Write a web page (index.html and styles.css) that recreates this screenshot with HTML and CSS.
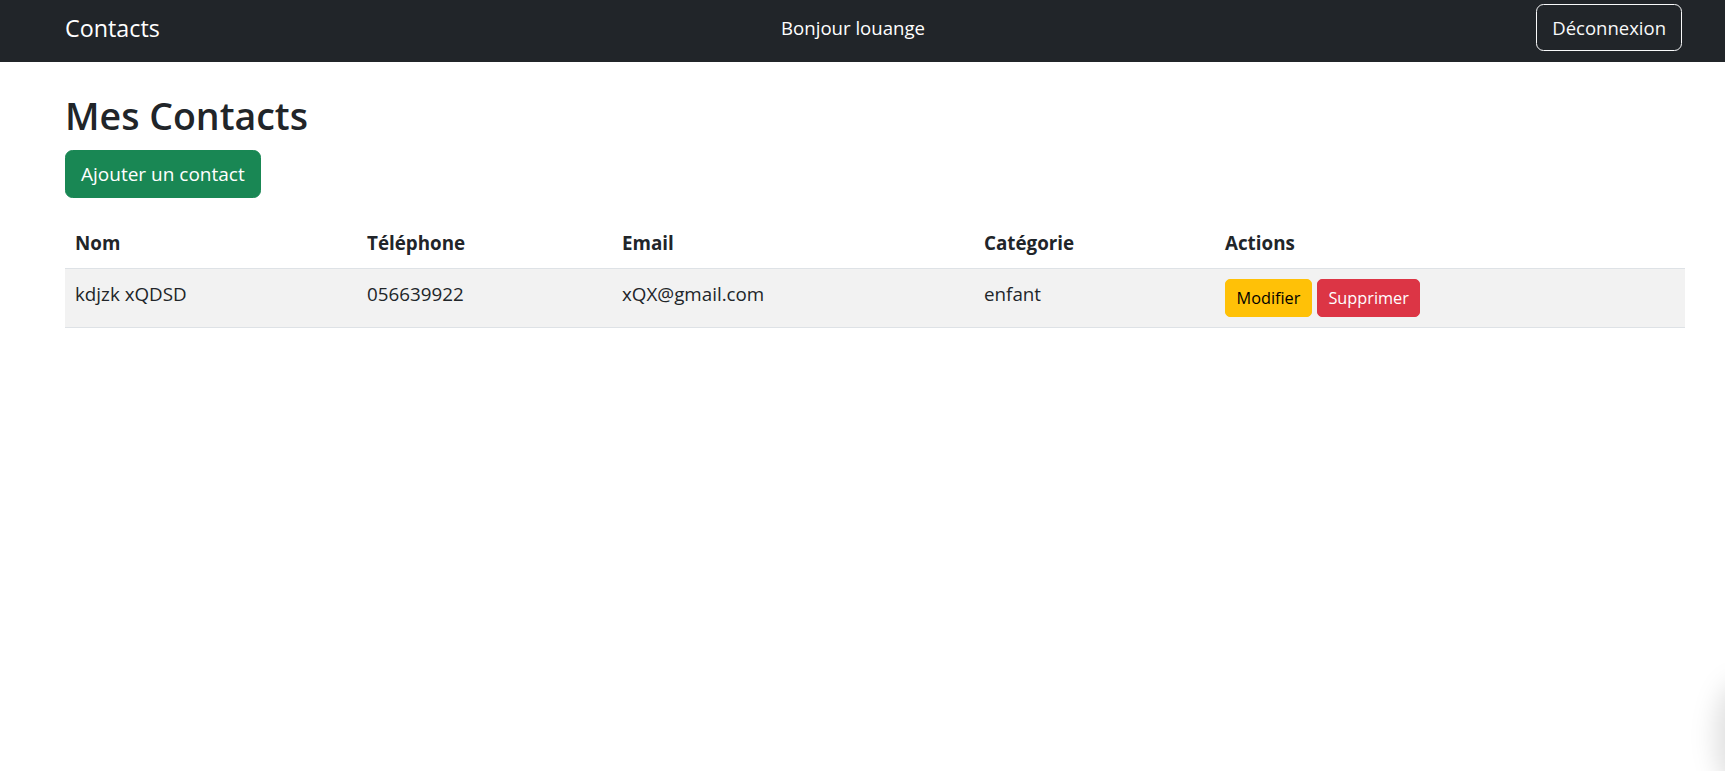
FILE: index.html
```html
<!DOCTYPE html>
<html lang="fr">
<head>
<meta charset="utf-8">
<title>Mes Contacts</title>
<link rel="stylesheet" href="styles.css">
</head>
<body>
<nav class="navbar">
  <div class="nav-inner">
    <a class="brand" href="#">Contacts</a>
    <span class="greeting">Bonjour louange</span>
    <button class="btn btn-outline-light">Déconnexion</button>
  </div>
</nav>
<main class="container">
  <h2 class="title">Mes Contacts</h2>
  <button class="btn btn-success">Ajouter un contact</button>
  <table class="table">
    <colgroup>
      <col class="col-nom">
      <col class="col-tel">
      <col class="col-email">
      <col class="col-cat">
      <col class="col-actions">
    </colgroup>
    <thead>
      <tr>
        <th>Nom</th>
        <th>Téléphone</th>
        <th>Email</th>
        <th>Catégorie</th>
        <th>Actions</th>
      </tr>
    </thead>
    <tbody>
      <tr class="striped">
        <td>kdjzk xQDSD</td>
        <td>056639922</td>
        <td>xQX@gmail.com</td>
        <td>enfant</td>
        <td>
          <div class="actions">
            <button class="btn-sm btn-warning">Modifier</button>
            <button class="btn-sm btn-danger">Supprimer</button>
          </div>
        </td>
      </tr>
    </tbody>
  </table>
</main>
<div class="edge-shadow"></div>
</body>
</html>
```
FILE: styles.css
```css
* { box-sizing: border-box; }

html, body {
  margin: 0;
  padding: 0;
  background: #fff;
}

body {
  font-family: "Open Sans", "Noto Sans", "Liberation Sans", sans-serif;
  font-size: 18.8px;
  line-height: 30px;
  color: #212529;
  width: 1725px;
  min-height: 771px;
  position: relative;
  overflow: hidden;
}

/* Navbar */
.navbar {
  background: #212529;
  height: 62px;
  padding: 4px 0 11px;
}

.nav-inner {
  display: flex;
  align-items: center;
  height: 47px;
  margin-left: 65px;
  width: 1617px;
}

.brand {
  color: #fff;
  text-decoration: none;
  font-size: 23.3px;
  line-height: 34px;
  margin-right: 10px;
}

.greeting {
  color: #fff;
  font-size: 18.6px;
  margin: 0 auto;
}

.btn {
  font-family: inherit;
  cursor: pointer;
  border-radius: 7.5px;
  border: 1px solid transparent;
  display: inline-block;
}

.btn-outline-light {
  color: #f8f9fa;
  background: transparent;
  border-color: #f8f9fa;
  font-size: 18.5px;
  line-height: 29px;
  height: 47px;
  padding: 8px 15px;
}

/* Main */
.container {
  margin-left: 65px;
  width: 1620px;
  padding-top: 30px;
}

.title {
  margin: 0 0 10px;
  font-size: 37.5px;
  line-height: 48px;
  font-weight: 600;
  height: 48px;
}

.btn-success {
  background: #198754;
  border-color: #198754;
  color: #fff;
  font-size: 19px;
  line-height: 30px;
  height: 47.5px;
  padding: 7.5px 15px;
}

/* Table */
.table {
  width: 100%;
  margin-top: 20px;
  border-collapse: collapse;
  table-layout: fixed;
}

.col-nom { width: 292px; }
.col-tel { width: 255px; }
.col-email { width: 362px; }
.col-cat { width: 241px; }
.col-actions { width: auto; }

.table th,
.table td {
  text-align: left;
  vertical-align: top;
  padding: 10px;
  border-bottom: 1px solid #dee2e6;
}

.table th {
  font-weight: 700;
}

.table tr.striped td {
  background: #f2f2f2;
}

.actions {
  display: flex;
  gap: 5px;
}

.btn-sm {
  font-family: inherit;
  font-size: 16.3px;
  line-height: 26px;
  height: 38.5px;
  padding: 5px 10.5px;
  border-radius: 5px;
  border: 1px solid transparent;
  cursor: pointer;
}

.btn-warning {
  background: #ffc107;
  border-color: #ffc107;
  color: #000;
}

.btn-danger {
  background: #dc3545;
  border-color: #dc3545;
  color: #fff;
}

.edge-shadow {
  position: absolute;
  right: -40px;
  bottom: -20px;
  width: 50px;
  height: 110px;
  border-radius: 50%;
  background: rgba(0, 0, 0, 0.12);
  filter: blur(12px);
}
```
